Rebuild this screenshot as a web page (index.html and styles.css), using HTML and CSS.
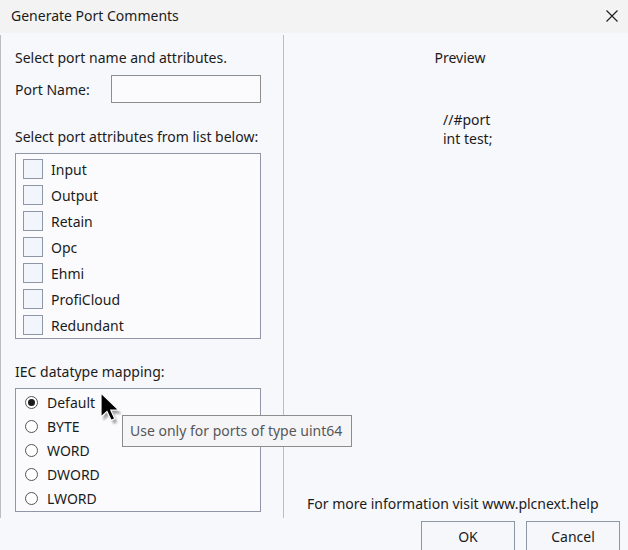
FILE: index.html
```html
<!DOCTYPE html>
<html>
<head>
<meta charset="utf-8">
<link rel="stylesheet" href="styles.css">
</head>
<body>
<div class="dialog">
  <div class="titlebar">
    <span class="title">Generate Port Comments</span>
    <svg class="close" width="12" height="12" viewBox="0 0 12 12"><path d="M0.5 0.5 L11.5 11.5 M11.5 0.5 L0.5 11.5" stroke="#1b1b1b" stroke-width="1.1" fill="none"/></svg>
  </div>
  <div class="content">
    <div class="left">
      <div class="line l1">Select port name and attributes.</div>
      <div class="name-row">
        <span class="name-label">Port Name:</span>
        <div class="input"></div>
      </div>
      <div class="line l3">Select port attributes from list below:</div>
      <div class="listbox checks">
        <div class="row"><span class="cb"></span><span>Input</span></div>
        <div class="row"><span class="cb"></span><span>Output</span></div>
        <div class="row"><span class="cb"></span><span>Retain</span></div>
        <div class="row"><span class="cb"></span><span>Opc</span></div>
        <div class="row"><span class="cb"></span><span>Ehmi</span></div>
        <div class="row"><span class="cb"></span><span>ProfiCloud</span></div>
        <div class="row"><span class="cb"></span><span>Redundant</span></div>
      </div>
      <div class="line l4">IEC datatype mapping:</div>
      <div class="listbox radios">
        <div class="rrow"><span class="radio checked"></span><span>Default</span></div>
        <div class="rrow"><span class="radio"></span><span>BYTE</span></div>
        <div class="rrow"><span class="radio"></span><span>WORD</span></div>
        <div class="rrow"><span class="radio"></span><span>DWORD</span></div>
        <div class="rrow"><span class="radio"></span><span>LWORD</span></div>
      </div>
    </div>
    <div class="right">
      <div class="preview-title">Preview</div>
      <div class="code">
        <div>//#port</div>
        <div>int test;</div>
      </div>
      <div class="spacer"></div>
      <div class="info">For more information visit www.plcnext.help</div>
    </div>
  </div>
  <div class="buttons">
    <div class="btn">OK</div>
    <div class="btn">Cancel</div>
  </div>
  <div class="tooltip">Use only for ports of type uint64</div>
  <svg class="cursor" width="26" height="34" viewBox="0 0 26 34">
    <defs>
      <filter id="sh" x="-30%" y="-30%" width="160%" height="160%">
        <feGaussianBlur stdDeviation="1.3"/>
      </filter>
    </defs>
    <path d="M3 3 L3 27 L9 21.4 L13.2 30.4 L16.8 28.8 L12.8 20.2 L21 20.2 Z" fill="#000" opacity="0.35" filter="url(#sh)" transform="translate(1.5,1.5)"/>
    <path d="M2 1 L2 25 L8 19.4 L12.2 28.4 L15.8 26.8 L11.8 18.2 L20 18.2 Z" fill="#000" stroke="#fff" stroke-width="1.2" stroke-linejoin="miter"/>
  </svg>
</div>
</body>
</html>
```

FILE: styles.css
```css
* { box-sizing: border-box; }
html, body {
  margin: 0;
  padding: 0;
}
body {
  font-family: "Noto Sans", "Open Sans", sans-serif;
  font-size: 14px;
  color: #1b1b1b;
  background: #f7f8fc;
}
.dialog {
  position: relative;
  width: 628px;
  height: 550px;
  overflow: hidden;
  background: #f7f8fc;
}
.titlebar {
  height: 33px;
  background: #f3f3f3;
  display: flex;
  align-items: center;
  justify-content: space-between;
  padding: 0 10px 2px 11px;
}
.title {
  font-size: 14px;
  color: #1b1b1b;
}
.close {
  display: block;
}
.content {
  display: flex;
  height: 486px;
}
.left {
  width: 284px;
  border-left: 1px solid #bdbdbd;
  border-right: 1px solid #bdbdbd;
  margin-top: 2px;
  height: 483px;
  padding: 13px 0 0 14px;
}
.line {
  height: 20px;
  line-height: 20px;
}
.name-row {
  display: flex;
  align-items: center;
  margin-top: 7px;
  height: 28px;
}
.name-label {
  width: 96px;
}
.input {
  width: 150px;
  height: 28px;
  border: 1px solid #8e8e8e;
  background: #fbfbfd;
}
.l3 { margin-top: 24px; }
.listbox {
  width: 246px;
  border: 1px solid #8f97a6;
  background: #fbfbfd;
}
.checks {
  margin-top: 6px;
  padding: 5px 0 3px 7px;
  display: flex;
  flex-direction: column;
  gap: 6px;
}
.row {
  display: flex;
  align-items: center;
  height: 20px;
  gap: 8px;
}
.cb {
  width: 20px;
  height: 20px;
  border: 1px solid #8f97a6;
  background: #f2f5fc;
}
.l4 { margin-top: 23px; }
.radios {
  margin-top: 6px;
  padding: 1px 0 1px 9px;
}
.rrow {
  display: flex;
  align-items: center;
  height: 24px;
  gap: 9px;
}
.radio {
  width: 13px;
  height: 13px;
  border: 1px solid #555;
  border-radius: 50%;
  background: #fff;
  display: flex;
  align-items: center;
  justify-content: center;
}
.radio.checked::after {
  content: "";
  width: 7px;
  height: 7px;
  border-radius: 50%;
  background: #1b1b1b;
}
.right {
  flex: 1;
  display: flex;
  flex-direction: column;
  padding-top: 15px;
}
.preview-title {
  line-height: 20px;
  padding-left: 8px;
  text-align: center;
}
.code {
  margin-top: 42px;
  margin-left: 159px;
  line-height: 19px;
}
.spacer { flex: 1; }
.info {
  line-height: 20px;
  margin-left: 23px;
  margin-bottom: 5px;
}
.buttons {
  display: flex;
  justify-content: flex-end;
  gap: 11px;
  padding-right: 8px;
  margin-top: 2px;
}
.btn {
  width: 94px;
  height: 31px;
  border: 1px solid #8f97a6;
  background: #f6f7fb;
  display: flex;
  align-items: center;
  justify-content: center;
}
.tooltip {
  position: absolute;
  left: 122px;
  top: 415px;
  width: 230px;
  height: 32px;
  border: 1px solid #8c8c8c;
  background: #f5f5f7;
  color: #575757;
  padding-left: 7px;
  line-height: 30px;
}
.cursor {
  position: absolute;
  left: 99px;
  top: 392px;
}
```
